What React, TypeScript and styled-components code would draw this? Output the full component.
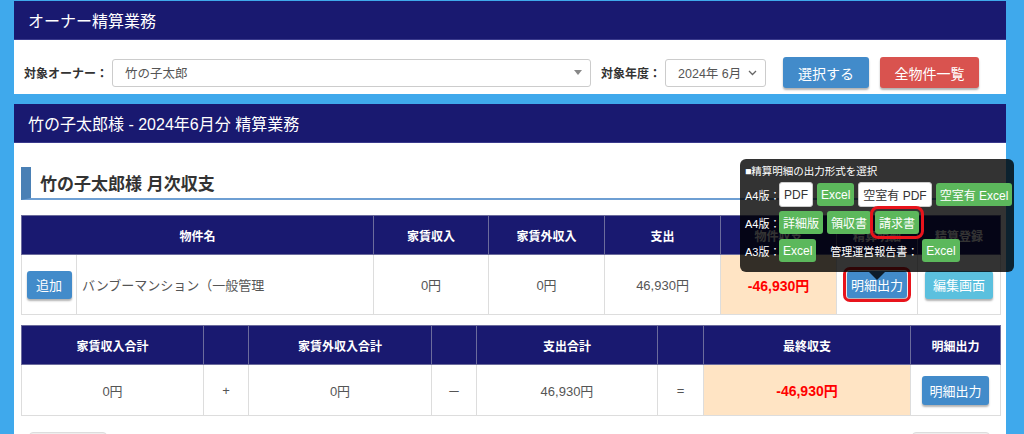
import React from 'react';
import styled, { createGlobalStyle, css } from 'styled-components';

const GlobalStyle = createGlobalStyle`
  html, body {
    margin: 0;
    padding: 0;
    overflow: hidden;
  }
  body {
    background: #3fa9ec;
    font-family: "Liberation Sans", "Noto Sans CJK JP", sans-serif;
    color: #555;
  }
`;

const navy = '#191970';

const Page = styled.div`
  padding: 1px 18px 0 14px;
`;

const Panel = styled.section`
  background: #fff;
  margin-bottom: 10px;
`;

const PanelHeader = styled.div`
  height: 38px;
  background: ${navy};
  border-bottom: 1px solid #3a3a8c;
  color: #fff;
  font-size: 16px;
  padding-left: 14px;
  display: flex;
  align-items: center;
`;

const FilterRow = styled.div`
  display: flex;
  align-items: center;
  padding: 17px 10px 6px;
  height: 31px;
`;

const Label = styled.span<{ $gap?: number }>`
  font-size: 12px;
  font-weight: bold;
  color: #333;
  margin-left: ${(p) => p.$gap ?? 0}px;
  margin-right: 4px;
  white-space: nowrap;
`;

const FakeSelect = styled.div<{ $w: number }>`
  width: ${(p) => p.$w}px;
  height: 28px;
  box-sizing: border-box;
  border: 1px solid #ccc;
  border-radius: 3px;
  display: flex;
  align-items: center;
  justify-content: space-between;
  padding: 0 8px 0 12px;
  font-size: 12.5px;
  color: #555;
  background: #fff;
`;

const Btn = styled.button<{ $color: string; $w?: number; $h?: number; $fs?: number; $mark?: number; $gap?: number }>`
  border: none;
  border-radius: 3px;
  background: ${(p) => p.$color};
  color: #fff;
  font-family: inherit;
  font-size: ${(p) => p.$fs ?? 13}px;
  width: ${(p) => (p.$w ? `${p.$w}px` : 'auto')};
  height: ${(p) => p.$h ?? 28}px;
  margin-left: ${(p) => p.$gap ?? 0}px;
  padding: 0;
  box-shadow: 0 2px 2px rgba(0, 0, 0, 0.3);
  cursor: pointer;
  white-space: nowrap;
  ${(p) =>
    p.$mark !== undefined &&
    css`
      outline: 3px solid #e8141c;
      outline-offset: ${p.$mark}px;
    `}
`;

const Body = styled.div`
  padding: 0 6px 20px 7px;
`;

const Heading = styled.h2`
  margin: 24px 0 0;
  height: 31px;
  border-left: 10px solid #4a80b5;
  border-bottom: 2px solid #6e9fd3;
  padding-left: 9px;
  display: flex;
  align-items: center;
  font-size: 17px;
  font-weight: bold;
  color: #333;
`;

const Table = styled.table<{ $top: number }>`
  width: 979px;
  margin-top: ${(p) => p.$top}px;
  border-collapse: collapse;
  table-layout: fixed;
`;

const Th = styled.th`
  height: 38px;
  background: ${navy};
  color: #fff;
  font-size: 12px;
  font-weight: bold;
  border: 1px solid #6b6b9c;
  padding: 0;
`;

const Td = styled.td<{ $h: number; $left?: boolean; $total?: boolean }>`
  height: ${(p) => p.$h}px;
  border: 1px solid #ddd;
  text-align: ${(p) => (p.$left ? 'left' : 'center')};
  padding: ${(p) => (p.$left ? '0 0 0 5px' : '0')};
  font-size: 13px;
  color: #555;
  position: relative;
  ${(p) =>
    p.$total &&
    css`
      background: #ffe4c4;
      color: #ff0000;
      font-weight: bold;
      font-size: 14px;
    `}
`;

const Anchor = styled.span`
  position: relative;
  display: inline-block;
`;

const Popover = styled.div`
  position: absolute;
  bottom: calc(100% - 1px);
  left: 50%;
  transform: translateX(-50%);
  width: 274px;
  box-sizing: border-box;
  padding: 2px 2px 10px 5px;
  background: rgba(0, 0, 0, 0.8);
  border-radius: 6px;
  color: #fff;
  text-align: left;
  z-index: 5;
  &::after {
    content: '';
    position: absolute;
    left: 50%;
    bottom: -8px;
    margin-left: -8px;
    border-left: 8px solid transparent;
    border-right: 8px solid transparent;
    border-top: 8px solid rgba(0, 0, 0, 0.8);
  }
`;

const PopTitle = styled.div`
  font-size: 10.5px;
  line-height: 21px;
  height: 21px;
  white-space: nowrap;
`;

const PopRow = styled.div<{ $top: number }>`
  display: flex;
  align-items: center;
  gap: 4px;
  height: 23px;
  margin-top: ${(p) => p.$top}px;
`;

const PopLabel = styled.span<{ $gap?: number; $w?: number }>`
  font-size: 11px;
  width: ${(p) => (p.$w ? `${p.$w}px` : 'auto')};
  margin-left: ${(p) => p.$gap ?? 0}px;
  white-space: nowrap;
`;

const PopBtn = styled.span<{ $light?: boolean; $mark?: boolean }>`
  display: inline-flex;
  align-items: center;
  height: 23px;
  padding: 0 4px;
  border-radius: 3px;
  font-size: 12px;
  white-space: nowrap;
  background: ${(p) => (p.$light ? '#fff' : '#5cb85c')};
  color: ${(p) => (p.$light ? '#333' : '#fff')};
  border: ${(p) => (p.$light ? '1px solid #ccc' : 'none')};
  ${(p) =>
    p.$mark &&
    css`
      outline: 3px solid #e8141c;
      outline-offset: 2px;
    `}
`;

const Footer = styled.div`
  display: flex;
  justify-content: space-between;
  padding: 16px 10px 0 8px;
`;

const GrayBtn = styled.div`
  width: 76px;
  height: 30px;
  border: 1px solid #ddd;
  border-radius: 4px;
  background: #eee;
`;

const Caret = () => (
  <svg width="8" height="5" viewBox="0 0 8 5">
    <path d="M0 0 L8 0 L4 5 Z" fill="#888" />
  </svg>
);

const Chevron = () => (
  <svg width="9" height="6" viewBox="0 0 9 6">
    <path d="M1 1 L4.5 4.5 L8 1" fill="none" stroke="#666" strokeWidth="1.3" />
  </svg>
);

const blue = '#428bca';

function OutputPopover() {
  return (
    <Popover>
      <PopTitle>■精算明細の出力形式を選択</PopTitle>
      <PopRow $top={1}>
        <PopLabel $w={30}>A4版：</PopLabel>
        <PopBtn $light>PDF</PopBtn>
        <PopBtn>Excel</PopBtn>
        <PopBtn $light>空室有 PDF</PopBtn>
        <PopBtn>空室有 Excel</PopBtn>
      </PopRow>
      <PopRow $top={5}>
        <PopLabel $w={30}>A4版：</PopLabel>
        <PopBtn>詳細版</PopBtn>
        <PopBtn>領収書</PopBtn>
        <PopBtn $mark>請求書</PopBtn>
      </PopRow>
      <PopRow $top={5}>
        <PopLabel $w={30}>A3版：</PopLabel>
        <PopBtn>Excel</PopBtn>
        <PopLabel $gap={10}>管理運営報告書：</PopLabel>
        <PopBtn>Excel</PopBtn>
      </PopRow>
    </Popover>
  );
}

export default function App() {
  return (
    <>
      <GlobalStyle />
      <Page>
        <Panel>
          <PanelHeader>オーナー精算業務</PanelHeader>
          <FilterRow>
            <Label>対象オーナー：</Label>
            <FakeSelect $w={479}>
              <span>竹の子太郎</span>
              <Caret />
            </FakeSelect>
            <Label $gap={10}>対象年度：</Label>
            <FakeSelect $w={101}>
              <span>2024年 6月</span>
              <Chevron />
            </FakeSelect>
            <Btn $color={blue} $w={86} $h={31} $fs={14} $gap={17}>
              選択する
            </Btn>
            <Btn $color="#d9534f" $w={99} $h={31} $fs={14} $gap={11}>
              全物件一覧
            </Btn>
          </FilterRow>
        </Panel>

        <Panel>
          <PanelHeader>竹の子太郎様 - 2024年6月分 精算業務</PanelHeader>
          <Body>
            <Heading>竹の子太郎様 月次収支</Heading>

            <Table $top={15}>
              <colgroup>
                {[55, 297, 115, 116, 116, 116, 81, 83].map((w, i) => (
                  <col key={i} style={{ width: w }} />
                ))}
              </colgroup>
              <thead>
                <tr>
                  <Th colSpan={2}>物件名</Th>
                  <Th>家賃収入</Th>
                  <Th>家賃外収入</Th>
                  <Th>支出</Th>
                  <Th>物件収支</Th>
                  <Th>精算明細</Th>
                  <Th>精算登録</Th>
                </tr>
              </thead>
              <tbody>
                <tr>
                  <Td $h={59}>
                    <Btn $color={blue} $w={45}>追加</Btn>
                  </Td>
                  <Td $h={59} $left>バンブーマンション（一般管理</Td>
                  <Td $h={59}>0円</Td>
                  <Td $h={59}>0円</Td>
                  <Td $h={59}>46,930円</Td>
                  <Td $h={59} $total>-46,930円</Td>
                  <Td $h={59}>
                    <Anchor>
                      <Btn $color={blue} $w={60} $h={27} $mark={1}>
                        明細出力
                      </Btn>
                      <OutputPopover />
                    </Anchor>
                  </Td>
                  <Td $h={59}>
                    <Btn $color="#5bc0de" $w={68}>編集画面</Btn>
                  </Td>
                </tr>
              </tbody>
            </Table>

            <Table $top={10}>
              <colgroup>
                {[182, 45, 183, 45, 181, 46, 207, 90].map((w, i) => (
                  <col key={i} style={{ width: w }} />
                ))}
              </colgroup>
              <thead>
                <tr>
                  <Th>家賃収入合計</Th>
                  <Th />
                  <Th>家賃外収入合計</Th>
                  <Th />
                  <Th>支出合計</Th>
                  <Th />
                  <Th>最終収支</Th>
                  <Th>明細出力</Th>
                </tr>
              </thead>
              <tbody>
                <tr>
                  <Td $h={50}>0円</Td>
                  <Td $h={50}>+</Td>
                  <Td $h={50}>0円</Td>
                  <Td $h={50}>－</Td>
                  <Td $h={50}>46,930円</Td>
                  <Td $h={50}>=</Td>
                  <Td $h={50} $total>-46,930円</Td>
                  <Td $h={50}>
                    <Btn $color={blue} $w={67} $h={29}>明細出力</Btn>
                  </Td>
                </tr>
              </tbody>
            </Table>

            <Footer>
              <GrayBtn />
              <GrayBtn />
            </Footer>
          </Body>
        </Panel>
      </Page>
    </>
  );
}
